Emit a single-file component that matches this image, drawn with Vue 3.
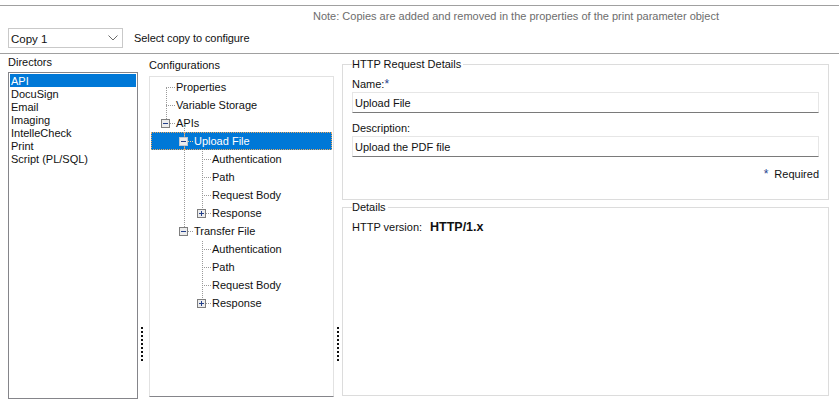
<template>
  <div class="page">
    <!-- Copy selector -->
    <div class="top-bar">
      <div class="note">Note: Copies are added and removed in the properties of the print parameter object</div>
      <div class="copy-row">
        <div class="copy-select">
          <span class="copy-value">Copy 1</span>
          <svg width="10" height="6" viewBox="0 0 10 6"><path d="M0.5 0.5 L5 5 L9.5 0.5" fill="none" stroke="#6a6a6a" /></svg>
        </div>
        <span class="copy-hint">Select copy to configure</span>
      </div>
    </div>

    <div class="main">
      <!-- Directors -->
      <div class="directors">
        <div class="pane-title">Directors</div>
        <ul class="director-list">
          <li v-for="d in directors" :key="d" :class="{ active: d === selectedDirector }">{{ d }}</li>
        </ul>
      </div>

      <div class="gutter gutter-left"><div class="grip"></div></div>

      <!-- Configurations tree -->
      <div class="configurations">
        <div class="pane-title">Configurations</div>
        <div class="tree">
          <svg class="tree-lines" width="183" height="320" viewBox="0 0 183 320">
            <g stroke="#9a9a9a" stroke-dasharray="1 1" fill="none">
              <path d="M16.5 11 V43" />
              <path d="M34.5 47 V152" />
              <path d="M52.5 74 V136" />
              <path d="M52.5 164 V226" />
            </g>
            <path d="M34.5 56 V73" stroke="#f0b070" stroke-dasharray="1 1" fill="none" />
          </svg>
          <div
            v-for="node in nodes"
            :key="node.id"
            class="tree-row"
            :class="['level-' + node.level, { selected: node.id === selectedNode }]"
          >
            <span class="slot" :class="{ leaf: !node.toggle }">
              <span v-if="node.toggle" class="toggle">
                <svg width="9" height="9" viewBox="0 0 9 9">
                  <rect class="toggle-box" x="0.5" y="0.5" width="8" height="8" />
                  <path d="M2 4.5 H7" stroke="#24408a" />
                  <path v-if="node.toggle === 'plus'" d="M4.5 2 V7" stroke="#24408a" />
                </svg>
              </span>
            </span>
            <span class="node-label">{{ node.label }}</span>
          </div>
        </div>
      </div>

      <div class="gutter gutter-right"><div class="grip"></div></div>

      <!-- Detail forms -->
      <div class="forms">
        <fieldset class="group request-group">
          <legend>HTTP Request Details</legend>
          <label class="field-label">Name:<span class="star">*</span></label>
          <input class="field-input" type="text" value="Upload File" />
          <label class="field-label second">Description:</label>
          <input class="field-input" type="text" value="Upload the PDF file" />
          <div class="required"><span class="star">*</span><span class="required-text">Required</span></div>
        </fieldset>
        <fieldset class="group details-group">
          <legend>Details</legend>
          <div class="version">
            <span class="version-label">HTTP version:</span>
            <strong>HTTP/1.x</strong>
          </div>
        </fieldset>
      </div>
    </div>
  </div>
</template>

<script setup>
import { ref } from 'vue'

const directors = ['API', 'DocuSign', 'Email', 'Imaging', 'IntelleCheck', 'Print', 'Script (PL/SQL)']
const selectedDirector = ref('API')
const selectedNode = ref(4)

const nodes = [
  { id: 1, level: 0, label: 'Properties' },
  { id: 2, level: 0, label: 'Variable Storage' },
  { id: 3, level: 0, label: 'APIs', toggle: 'minus' },
  { id: 4, level: 1, label: 'Upload File', toggle: 'minus' },
  { id: 5, level: 2, label: 'Authentication' },
  { id: 6, level: 2, label: 'Path' },
  { id: 7, level: 2, label: 'Request Body' },
  { id: 8, level: 2, label: 'Response', toggle: 'plus' },
  { id: 9, level: 1, label: 'Transfer File', toggle: 'minus' },
  { id: 10, level: 2, label: 'Authentication' },
  { id: 11, level: 2, label: 'Path' },
  { id: 12, level: 2, label: 'Request Body' },
  { id: 13, level: 2, label: 'Response', toggle: 'plus' }
]
</script>

<style>
html, body {
  margin: 0;
  background: #fff;
}
</style>

<style scoped>
.page {
  width: 839px;
  height: 405px;
  box-sizing: border-box;
  padding-top: 5px;
  overflow: hidden;
  background: #fff;
  color: #111;
  font-family: "Liberation Sans", Arial, sans-serif;
  font-size: 11px;
}

.top-bar {
  height: 47px;
  border-top: 1px solid #a0a0a0;
  border-bottom: 1px solid #a0a0a0;
}

.note {
  margin-top: 4px;
  padding-right: 120px;
  text-align: right;
  line-height: 13px;
  color: #6d6d6d;
}

.copy-row {
  display: flex;
  align-items: center;
  margin-top: 5px;
  padding-left: 8px;
}

.copy-select {
  width: 115px;
  height: 20px;
  box-sizing: border-box;
  display: flex;
  align-items: center;
  justify-content: space-between;
  padding: 0 4px 0 2px;
  border: 1px solid #c9c9c9;
  font-size: 11.5px;
}

.copy-value {
  margin-top: 1px;
}

.copy-hint {
  margin-left: 11px;
  margin-top: -1px;
  letter-spacing: -0.08px;
}

.main {
  display: flex;
  height: 351px;
}

.pane-title {
  line-height: 13px;
}

.directors {
  width: 130px;
  margin-left: 8px;
  padding-top: 2px;
}

.director-list {
  width: 130px;
  height: 327px;
  box-sizing: border-box;
  margin: 3px 0 0;
  padding: 1px;
  list-style: none;
  border: 1px solid #85858a;
}

.director-list li {
  height: 13px;
  line-height: 15px;
  padding-left: 1px;
}

.director-list li.active {
  background: #0078d7;
  color: #fff;
}

.gutter {
  display: flex;
  flex-direction: column;
  justify-content: flex-end;
  align-items: center;
  padding-bottom: 44px;
  box-sizing: border-box;
}

.gutter-left {
  width: 11px;
  padding-right: 3px;
}

.gutter-right {
  width: 8px;
}

.grip {
  width: 2px;
  height: 34px;
  background: repeating-linear-gradient(#111 0 2px, transparent 2px 4px);
}

.configurations {
  width: 185px;
  padding-top: 5px;
}

.tree {
  position: relative;
  width: 185px;
  height: 321px;
  box-sizing: border-box;
  margin-top: 4px;
  padding-top: 1px;
  border: 1px solid #e2e2e2;
  border-bottom-color: #85858a;
}

.tree-lines {
  position: absolute;
  top: 0;
  left: 0;
  z-index: 1;
  pointer-events: none;
}

.tree-row {
  height: 18px;
  box-sizing: border-box;
  display: flex;
  align-items: center;
  margin-left: 1px;
  margin-right: 1px;
}

.tree-row.selected {
  background: #0078d7;
  color: #fff;
  outline: 1px dotted #e8a860;
  outline-offset: -1px;
}

.tree-row.selected .slot::after {
  border-top-color: #f0d0a0;
}

.tree-row.selected .toggle-box {
  stroke: #c4c8d0;
}

.level-0 { padding-left: 10px; }
.level-1 { padding-left: 28px; }
.level-2 { padding-left: 46px; }

.slot {
  position: relative;
  flex: none;
  width: 15px;
  height: 18px;
  display: flex;
  align-items: center;
}

.slot::after {
  content: "";
  position: absolute;
  top: 9px;
  left: 5px;
  width: 9px;
  border-top: 1px dotted #9a9a9a;
}

.toggle {
  position: relative;
  z-index: 2;
  display: flex;
  width: 9px;
  height: 9px;
}

.toggle-box {
  fill: #ececec;
  stroke: #7e7e7e;
}

.forms {
  width: 487px;
  display: flex;
  flex-direction: column;
  gap: 1px;
  padding-top: 4px;
}

.group {
  margin: 0;
  padding: 0 9px;
  min-width: 0;
  box-sizing: border-box;
  border: 1px solid #dcdcdc;
}

.group legend {
  padding: 0 2px 0 0;
  margin-left: 0;
  line-height: 13px;
}

.request-group {
  height: 142px;
}

.details-group {
  height: 195px;
}

.field-label {
  display: block;
  line-height: 13px;
  margin-top: 7px;
}

.field-label.second {
  margin-top: 9px;
}

.star {
  color: #1f3f8f;
  font-size: 12px;
}

.field-input {
  display: block;
  width: 100%;
  height: 21px;
  box-sizing: border-box;
  margin: 1px 0 0;
  padding: 0 2px;
  border: 1px solid #e6e6e6;
  border-bottom-color: #7a7a7a;
  outline: none;
  font: inherit;
  color: #111;
}

.required {
  display: flex;
  justify-content: flex-end;
  gap: 6px;
  line-height: 13px;
  margin-top: 11px;
}

.version {
  display: flex;
  align-items: center;
  margin-top: 6px;
}

.version-label {
  width: 78px;
  flex: none;
}

.version strong {
  font-size: 12.5px;
}
</style>
